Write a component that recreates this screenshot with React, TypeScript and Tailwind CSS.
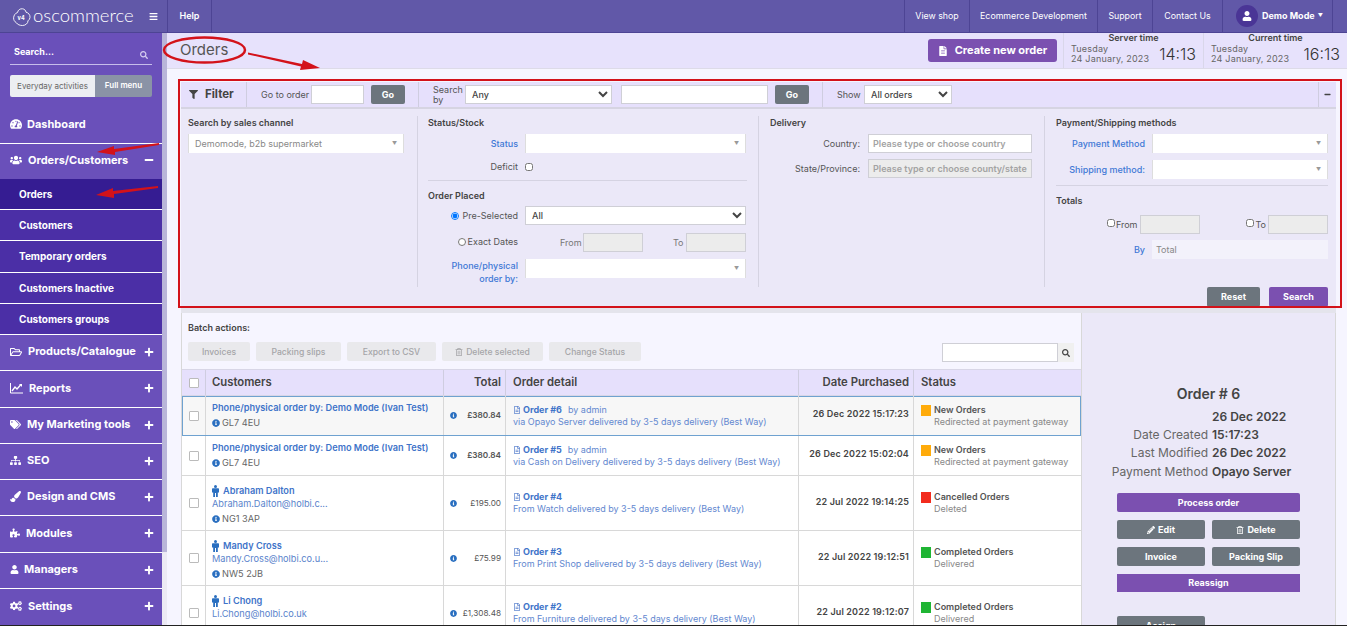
import type { ReactNode } from 'react';
import {
  FaBars, FaCogs, FaFileAlt, FaFilter, FaInfoCircle, FaMinus, FaPaintBrush,
  FaPencilAlt, FaPlus, FaPuzzlePiece, FaRegFileAlt, FaRegFolderOpen, FaRegTrashAlt, FaSearch,
  FaSitemap, FaTachometerAlt, FaTags, FaUser, FaUsers,
} from 'react-icons/fa';

function ChartIcon() {
  return (
    <svg width="13" height="12" viewBox="0 0 13 12" fill="none" stroke="#fff" className="block">
      <path d="M.5 1v10h12.500" strokeWidth="1" />
      <path d="M2 9l3-4 2 2 4-4.500" strokeWidth="1.300" />
      <path d="M9 2h3v3z" fill="#fff" stroke="none" />
    </svg>
  );
}

function MaleIcon() {
  return (
    <svg width="7" height="12" viewBox="0 0 7 12" fill="#2a6fc0" className="shrink-0">
      <circle cx="3.500" cy="1.500" r="1.500" />
      <path d="M1 3.200h5c.6 0 1 .4 1 1V7.500H5.800V12H4V8H3v4H1.200V7.500H0V4.200c0-.6.4-1 1-1Z" />
    </svg>
  );
}

const subItems = [
  { label: 'Orders', h: 'h-[31px]', cls: 'bg-[#351c92]' },
  { label: 'Customers', h: 'h-[31px]', cls: 'bg-[#4b2fa6]' },
  { label: 'Temporary orders', h: 'h-[32px]', cls: 'bg-[#4b2fa6]' },
  { label: 'Customers Inactive', h: 'h-[31px]', cls: 'bg-[#4b2fa6]' },
  { label: 'Customers groups', h: 'h-[31px]', cls: 'bg-[#4b2fa6]' },
];

const mainItems = [
  { label: 'Products/Catalogue', icon: <FaRegFolderOpen className="text-[12px]" />, w: 'w-[18px]', h: 'h-[36px]' },
  { label: 'Reports', icon: <ChartIcon />, w: 'w-[19px]', h: 'h-[37px]' },
  { label: 'My Marketing tools', icon: <FaTags className="text-[11px]" />, w: 'w-[17px]', h: 'h-[36px]' },
  { label: 'SEO', icon: <FaSitemap className="text-[11px]" />, w: 'w-[17px]', h: 'h-[36px]' },
  { label: 'Design and CMS', icon: <FaPaintBrush className="text-[11px]" />, w: 'w-[17px]', h: 'h-[36px]' },
  { label: 'Modules', icon: <FaPuzzlePiece className="text-[10px]" />, w: 'w-[16px]', h: 'h-[37px]' },
  { label: 'Managers', icon: <FaUser className="text-[9px]" />, w: 'w-[14px]', h: 'h-[36px]' },
  { label: 'Settings', icon: <FaCogs className="text-[12px]" />, w: 'w-[18px]', h: 'h-[36px]' },
];

const orders = [
  { h: 'h-[40px]', top: 'pt-[5px]', stTop: 'pt-[8px]', phone: true, name: 'Phone/physical order by: Demo Mode (Ivan Test)', post: 'GL7 4EU', total: '£380.84', no: '6', by: true, via: 'via Opayo Server delivered by 3-5 days delivery (Best Way)', date: '26 Dec 2022 15:17:23', color: 'bg-[#ffab0a]', status: 'New Orders', sub: 'Redirected at payment gateway', active: true },
  { h: 'h-[40px]', top: 'pt-[5px]', stTop: 'pt-[8px]', phone: true, name: 'Phone/physical order by: Demo Mode (Ivan Test)', post: 'GL7 4EU', total: '£380.84', no: '5', by: true, via: 'via Cash on Delivery delivered by 3-5 days delivery (Best Way)', date: '26 Dec 2022 15:02:04', color: 'bg-[#ffab0a]', status: 'New Orders', sub: 'Redirected at payment gateway' },
  { h: 'h-[55px]', top: 'pt-[8px]', stTop: 'pt-[15px]', name: 'Abraham Dalton', email: 'Abraham.Dalton@holbi.c...', post: 'NG1 3AP', total: '£195.00', no: '4', via: 'From Watch delivered by 3-5 days delivery (Best Way)', date: '22 Jul 2022 19:14:25', color: 'bg-[#f22c1e]', status: 'Cancelled Orders', sub: 'Deleted' },
  { h: 'h-[55px]', top: 'pt-[8px]', stTop: 'pt-[15px]', name: 'Mandy Cross', email: 'Mandy.Cross@holbi.co.u...', post: 'NW5 2JB', total: '£75.99', no: '3', via: 'From Print Shop delivered by 3-5 days delivery (Best Way)', date: '22 Jul 2022 19:12:51', color: 'bg-[#1fb534]', status: 'Completed Orders', sub: 'Delivered' },
  { h: 'h-[55px]', top: 'pt-[8px]', stTop: 'pt-[15px]', name: 'Li Chong', email: 'Li.Chong@holbi.co.uk', post: '', total: '£1,308.48', no: '2', via: 'From Furniture delivered by 3-5 days delivery (Best Way)', date: '22 Jul 2022 19:12:07', color: 'bg-[#1fb534]', status: 'Completed Orders', sub: 'Delivered' },
];

const cols = 'grid grid-cols-[24px_238px_62px_293px_115px_167px]';

function Logo() {
  return (
    <svg width="18" height="18" viewBox="0 0 18 18" fill="none" stroke="#fff" strokeWidth="0.9" className="mt-[1px] shrink-0">
      <path d="M4.500 4.500C5 2 7 .5 9.500.8c2 .2 3.300 1.700 3.500 3.400 2.500.5 4.300 2.800 4 5.300-.2 1.500-1 2.500-2 3.300 0 2.500-2.500 4.700-5.500 4.700-2.500 0-5-.8-6.200-2.800C1.500 13.500.5 12 .6 9.800.8 7.200 2.500 5 4.500 4.500Z" />
      <text x="4.600" y="11.500" fontSize="5.500" fontWeight="700" fill="#fff" stroke="none">v4</text>
    </svg>
  );
}

function TopLink({ children, w }: { children: ReactNode; w: string }) {
  return <div className={`${w} flex h-full items-center justify-center border-l border-[#4d4494] text-[8.800px] text-white`}>{children}</div>;
}

function TimeBox({ title, time, w, pr }: { title: string; time: string; w: string; pr: string }) {
  return (
    <div className={`${w} ${pr} flex h-full flex-col border-l border-[#d9d7ea] pl-[7px]`}>
      <div className="text-center text-[9px] leading-[10px] font-semibold text-[#444]">{title}</div>
      <div className="flex items-end justify-between pt-[1px]">
        <div className="text-[9px] leading-[10px] tracking-[0.2px] text-[#666]">Tuesday<br />24 January, 2023</div>
        <div className="text-[16px] leading-[20px] font-light text-[#333]">{time}</div>
      </div>
    </div>
  );
}

function Sidebar() {
  return (
    <aside className="flex w-[162px] shrink-0 flex-col bg-[#6a50ba] text-white">
      <div className="mx-[10px] mt-[11px] flex h-[21px] items-start justify-between border-b border-[#c7bdeb] pl-[4px] pt-[1px]">
        <span className="text-[9px] leading-[13px] font-bold">Search...</span>
        <FaSearch className="mr-[4px] mt-[6px] text-[8px] text-[#d5cdf0]" />
      </div>
      <div className="mx-[10px] mt-[10px] flex h-[22px] text-[8px]">
        <div className="flex w-[85px] items-center justify-center rounded-l-[2px] bg-[#eceef2] text-[#666]">Everyday activities</div>
        <div className="flex flex-1 items-center justify-center rounded-r-[2px] bg-[#8a93a6] pb-[3px] font-semibold">Full menu</div>
      </div>
      <div className="mt-[16px] flex h-[31px] items-center gap-[5px] border-b border-white pb-[8px] pl-[10px] text-[11px] font-bold">
        <FaTachometerAlt className="text-[12px]" />Dashboard
      </div>
      <div className="flex h-[35px] items-center gap-[6px] pb-[3px] pl-[10px] text-[11px] font-bold">
        <FaUsers className="text-[12px]" />Orders/Customers
        <FaMinus className="ml-auto mr-[8px] text-[10px]" />
      </div>
      {subItems.map((s) => (
        <div key={s.label} className={`${s.h} ${s.cls} flex shrink-0 items-center border-b border-white pl-[19px] text-[10px] font-bold`}>{s.label}</div>
      ))}
      {mainItems.map((m) => (
        <div key={m.label} className={`${m.h} flex shrink-0 items-center border-b border-white pb-[2px] pl-[10px] text-[11px] font-bold last:border-b-0`}>
          <span className={`${m.w} shrink-0`}>{m.icon}</span>{m.label}
          <FaPlus className="ml-auto mr-[8px] text-[10px]" />
        </div>
      ))}
    </aside>
  );
}

function FieldBox({ w, disabled, children }: { w: string; disabled?: boolean; children?: ReactNode }) {
  return <div className={`${w} h-[19px] border border-[#cfcfd6] px-[4px] text-[9px] leading-[17px] font-semibold text-[#a3a3a3] ${disabled ? 'bg-[#ececec]' : 'bg-white'}`}>{children}</div>;
}

function Combo({ w, text }: { w: string; text?: string }) {
  return (
    <div className={`${w} flex h-[19px] items-center justify-between border-x border-[#ddd] bg-white px-[6px] text-[9px] text-[#888]`}>
      <span>{text}</span>
      <span className="text-[5px] text-[#999]">▼</span>
    </div>
  );
}

function Native({ w, children }: { w: string; children: string }) {
  return (
    <select className={`${w} h-[19px] border border-[#cfcfd6] bg-white pl-[2px] text-[9px] font-medium text-[#444]`} defaultValue={children}>
      <option>{children}</option>
    </select>
  );
}

function Lbl({ w, blue, children }: { w: string; blue?: boolean; children: ReactNode }) {
  return <div className={`${w} shrink-0 text-right text-[9px] leading-[13px] ${blue ? 'font-medium text-[#3f78d6]' : 'text-[#555]'}`}>{children}</div>;
}

function Title({ children }: { children: string }) {
  return <div className="text-[9px] leading-[13px] font-semibold text-[#444]">{children}</div>;
}

function GoBtn() {
  return <div className="flex h-[19px] w-[34px] items-center justify-center rounded-[2px] bg-[#6c757d] text-[9px] font-bold text-white">Go</div>;
}

function Filter() {
  return (
    <section className="bg-[#ebe8f8]">
      <div className="flex h-[27px] items-center border-b-2 border-[#d6d4e2] bg-[#e6e0fc] text-[9px] text-[#555]">
        <div className="flex h-full w-[66px] items-center gap-[7px] border-r border-[#cfcde0] pl-[8px] text-[11.500px] font-bold text-[#444]">
          <FaFilter className="text-[9px]" />Filter
        </div>
        <span className="ml-[14px] w-[50px]">Go to order</span>
        <div className="h-[19px] w-[53px] border border-[#cfcfd6] bg-white" />
        <div className="ml-[7px]"><GoBtn /></div>
        <div className="ml-[13px] h-full border-l border-[#cfcde0]" />
        <span className="ml-[14px] w-[32px] leading-[10px]">Search<br />by</span>
        <Native w="w-[147px]">Any</Native>
        <div className="ml-[9px] h-[19px] w-[147px] border border-[#cfcfd6] bg-white" />
        <div className="ml-[7px]"><GoBtn /></div>
        <div className="ml-[13px] h-full border-l border-[#cfcde0]" />
        <span className="ml-[14px] w-[27px]">Show</span>
        <Native w="w-[88px]">All orders</Native>
        <div className="ml-auto flex h-full w-[18px] items-center justify-center border-l border-[#cfcde0]">
          <FaMinus className="text-[7px] text-[#444]" />
        </div>
      </div>
      <div className="grid h-[178px] grid-cols-[236px_341px_286px_1fr] pt-[7px]">
        <div className="h-[171px] px-[7px]">
          <Title>Search by sales channel</Title>
          <div className="mt-[5px]"><Combo w="w-[216px]" text="Demomode, b2b supermarket" /></div>
        </div>
        <div className="h-[171px] border-l border-[#d5d3e2] pl-[10px] pr-[11px]">
          <Title>Status/Stock</Title>
          <div className="mt-[5px] flex items-center gap-[7px]"><Lbl w="w-[90px]" blue>Status</Lbl><Combo w="w-[221px]" /></div>
          <div className="mt-[7px] flex items-center gap-[7px]">
            <Lbl w="w-[90px]">Deficit</Lbl>
            <input type="checkbox" className="h-[8px] w-[8px]" />
          </div>
          <div className="mt-[7px] border-t border-[#d5d3e2]" />
          <div className="mt-[8px]"><Title>Order Placed</Title></div>
          <div className="mt-[4px] flex h-[19px] items-center gap-[7px]">
            <Lbl w="w-[90px]"><input type="radio" name="placed" defaultChecked className="mr-[3px] h-[8px] w-[8px] align-[-1px]" />Pre-Selected</Lbl>
            <Native w="w-[221px]">All</Native>
          </div>
          <div className="mt-[8px] flex h-[19px] items-center">
            <div className="pb-[3px]"><Lbl w="w-[90px]"><input type="radio" name="placed" className="mr-[2px] h-[8px] w-[8px] align-[-1px]" />Exact Dates</Lbl></div>
            <span className="ml-[42px] w-[24px] text-[9px] text-[#777]">From</span>
            <FieldBox w="ml-[-1px] w-[60px]" disabled />
            <span className="ml-[30px] w-[13px] text-[9px] text-[#777]">To</span>
            <FieldBox w="w-[60px]" disabled />
          </div>
          <div className="mt-[7px] flex items-start gap-[7px]">
            <Lbl w="w-[90px]" blue>Phone/physical<br />order by:</Lbl>
            <Combo w="w-[221px]" />
          </div>
        </div>
        <div className="h-[171px] border-l border-[#d5d3e2] pl-[11px]">
          <Title>Delivery</Title>
          <div className="mt-[5px] flex items-center gap-[8px]"><Lbl w="w-[90px]">Country:</Lbl><FieldBox w="w-[164px]">Please type or choose country</FieldBox></div>
          <div className="mt-[6px] flex items-center gap-[8px]"><Lbl w="w-[90px]">State/Province:</Lbl><FieldBox w="w-[164px] overflow-hidden whitespace-nowrap" disabled>Please type or choose county/state</FieldBox></div>
        </div>
        <div className="h-[171px] border-l border-[#d5d3e2] pl-[11px] pr-[8px]">
          <Title>Payment/Shipping methods</Title>
          <div className="mt-[5px] flex items-center gap-[7px]"><Lbl w="w-[89px]" blue>Payment Method</Lbl><Combo w="w-[176px]" /></div>
          <div className="mt-[7px] flex items-center gap-[7px]"><Lbl w="w-[89px]" blue>Shipping method:</Lbl><Combo w="w-[176px]" /></div>
          <div className="mt-[6px] border-t border-[#d5d3e2]" />
          <div className="mt-[8px]"><Title>Totals</Title></div>
          <div className="mt-[8px] flex h-[19px] items-center justify-end text-[9px] text-[#555]">
            <input type="checkbox" className="mb-[4px] h-[8px] w-[8px]" />
            <span className="ml-[1px] mr-[3px]">From</span>
            <FieldBox w="w-[60px]" disabled />
            <input type="checkbox" className="mb-[4px] ml-[46px] h-[8px] w-[8px]" />
            <span className="ml-[1px] mr-[2px]">To</span>
            <FieldBox w="w-[60px]" disabled />
          </div>
          <div className="mt-[6px] flex items-center gap-[7px]">
            <Lbl w="w-[89px]" blue>By</Lbl>
            <div className="h-[19px] w-[176px] bg-[#f3f2fb] px-[4px] text-[9px] leading-[19px] text-[#888]">Total</div>
          </div>
        </div>
      </div>
      <div className="flex h-[20px] justify-end gap-[9px] pr-[8px] text-[9px] font-bold text-white">
        <div className="flex w-[53px] items-center justify-center rounded-[2px] bg-[#6c757d]">Reset</div>
        <div className="flex w-[59px] items-center justify-center rounded-[2px] bg-[#7b50b0]">Search</div>
      </div>
    </section>
  );
}

function BatchBtn({ w, children }: { w: string; children: ReactNode }) {
  return <div className={`${w} flex h-[19px] items-center justify-center gap-[3px] rounded-[2px] bg-[#e9e9ec] pt-[1px] text-[8.600px] font-medium text-[#a5a5a8]`}>{children}</div>;
}

function OrderRow({ o }: { o: (typeof orders)[number] }) {
  const cell = 'border-r border-[#d8d8d8]';
  return (
    <div className={`${cols} ${o.h} border-b ${o.active ? 'border-[#6fa2d0] bg-[#f7f7f7] shadow-[inset_0_1px_0_#6fa2d0,inset_1px_0_0_#6fa2d0,inset_-1px_0_0_#6fa2d0]' : 'border-[#d8d8d8] bg-white'}`}>
      <div className={`${cell} flex items-center justify-center`}>
        <span className="h-[10px] w-[10px] rounded-[1px] border border-[#bbb] bg-white" />
      </div>
      <div className={`${cell} ${o.top} pl-[6px] text-[9.200px]`}>
        <div className="flex items-center gap-[4px] leading-[13px] font-semibold text-[#3f74c9]">
          {!o.phone && <MaleIcon />}{o.name}
        </div>
        {o.email && <div className="leading-[13px] text-[#5a84cc]">{o.email}</div>}
        {o.post && (
          <div className="mt-[3px] flex items-center gap-[2px] leading-[12px] text-[#666]">
            <FaInfoCircle className="text-[8px] text-[#2a6fc0]" />{o.post}
          </div>
        )}
      </div>
      <div className={`${cell} flex items-center justify-between pl-[6px] pr-[4px] text-[8.200px] text-[#555] ${o.phone ? 'font-semibold' : ''}`}>
        <FaInfoCircle className="text-[7px] text-[#2a6fc0]" />{o.total}
      </div>
      <div className={`${cell} flex flex-col justify-center pl-[7px] text-[9px] text-[#6388d0]`}>
        <div className="flex items-center gap-[2px] leading-[12px]">
          <FaRegFileAlt className="text-[8px]" />
          <span className="font-bold text-[#3f74c9]">Order #{o.no}</span>
          {o.by && <span className="ml-[4px]">by admin</span>}
        </div>
        <div className="leading-[12px]">{o.via}</div>
      </div>
      <div className={`${cell} flex items-center justify-end pr-[4px] pb-[3px] text-[9px] font-semibold tracking-[0.15px] text-[#444]`}>{o.date}</div>
      <div className={`${o.stTop} flex items-start pl-[7px]`}>
        <span className={`${o.color} mt-[1px] h-[11px] w-[10px] shrink-0`} />
        <div className="ml-[3px] text-[9px]">
          <div className="leading-[12px] font-semibold text-[#555]">{o.status}</div>
          <div className="leading-[12px] text-[#888]">{o.sub}</div>
        </div>
      </div>
    </div>
  );
}

function OrdersTable() {
  const head = 'flex items-center border-r border-[#cfcde0]';
  return (
    <div className="w-[900px] shrink-0 border-l border-[#d8d8d8]">
      <div className="px-[6px] pt-[9px] text-[9px] leading-[11px] font-semibold text-[#444]">Batch actions:</div>
      <div className="mt-[9px] flex h-[20px] px-[6px]">
        <div className="flex gap-[6px]">
          <BatchBtn w="w-[62px]">Invoices</BatchBtn>
          <BatchBtn w="w-[85px]">Packing slips</BatchBtn>
          <BatchBtn w="w-[89px]">Export to CSV</BatchBtn>
          <BatchBtn w="w-[101px]"><FaRegTrashAlt className="text-[8px]" />Delete selected</BatchBtn>
          <BatchBtn w="w-[92px]">Change Status</BatchBtn>
        </div>
        <div className="ml-auto mr-[1px] mt-[1px] flex">
          <div className="h-[19px] w-[116px] border border-[#cfcfd6] bg-white" />
          <div className="flex h-[19px] w-[16px] items-center justify-center bg-[#f0f0f0]"><FaSearch className="text-[8px] text-[#444]" /></div>
        </div>
      </div>
      <div className={`${cols} mt-[7px] h-[27px] border-y border-[#d8d6e6] bg-[#e6e0fc] text-[11.300px] font-semibold text-[#444]`}>
        <div className={`${head} justify-center`}><span className="h-[10px] w-[10px] rounded-[1px] border border-[#bbb] bg-white" /></div>
        <div className={`${head} pl-[6px]`}>Customers</div>
        <div className={`${head} justify-end pr-[4px]`}>Total</div>
        <div className={`${head} pl-[7px]`}>Order detail</div>
        <div className={`${head} justify-end pr-[4px]`}>Date Purchased</div>
        <div className="flex items-center pl-[7px]">Status</div>
      </div>
      {orders.map((o) => <OrderRow key={o.no} o={o} />)}
    </div>
  );
}

function SideBtn({ w, purple, children }: { w: string; purple?: boolean; children: ReactNode }) {
  return <div className={`${w} flex h-[19px] items-center justify-center gap-[3px] rounded-[2px] text-[9px] font-bold text-white ${purple ? 'bg-[#7b50b0]' : 'bg-[#6c757d]'}`}>{children}</div>;
}

function DetailRow({ label, value, lh }: { label?: string; value: string; lh: string }) {
  return (
    <div className={`${lh} flex gap-[4px] text-[12px]`}>
      <div className="w-[126px] shrink-0 text-right whitespace-nowrap text-[#666]">{label}</div>
      <div className="font-semibold text-[#444]">{value}</div>
    </div>
  );
}

function OrderPanel() {
  return (
    <div className="flex-1 border-x border-[#d8d8d8] bg-[#ebe8f8] pt-[72px]">
      <div className="text-center text-[14px] leading-[18px] font-semibold text-[#444]">Order # 6</div>
      <div className="mt-[5px] flex flex-col">
        <DetailRow lh="leading-[18px]" value="26 Dec 2022" />
        <DetailRow lh="leading-[17px]" label="Date Created" value="15:17:23" />
        <DetailRow lh="leading-[19px]" label="Last Modified" value="26 Dec 2022" />
        <DetailRow lh="leading-[19px]" label="Payment Method" value="Opayo Server" />
      </div>
      <div className="ml-[35px] mt-[12px] flex w-[183px] flex-col gap-[8px]">
        <SideBtn w="w-full" purple>Process order</SideBtn>
        <div className="flex justify-between"><SideBtn w="w-[88px]"><FaPencilAlt className="text-[8px]" />Edit</SideBtn><SideBtn w="w-[88px]"><FaRegTrashAlt className="text-[8px]" />Delete</SideBtn></div>
        <div className="flex justify-between"><SideBtn w="w-[88px]">Invoice</SideBtn><SideBtn w="w-[88px]">Packing Slip</SideBtn></div>
        <div className="flex h-[18px] items-center justify-center bg-[#7b50b0] text-[9px] font-bold text-white">Reassign</div>
        <div className="mt-[16px]"><SideBtn w="w-[88px]">Assign</SideBtn></div>
      </div>
    </div>
  );
}

export default function App() {
  return (
    <div className="relative flex h-[626px] w-full flex-col overflow-hidden border-b border-[#222] bg-[#f6f5ff] [font-family:Inter,sans-serif]">
      <header className="flex h-[33px] shrink-0 items-center border-b border-[#4d4494] bg-[#6158a8] text-white">
        <div className="flex h-full w-[167px] items-center pl-[13px]">
          <Logo />
          <span className="ml-[2px] text-[18.500px] font-light [font-family:Lato,sans-serif]">oscommerce</span>
          <FaBars className="ml-auto mr-[9px] text-[9px]" />
        </div>
        <div className="flex h-full w-[45px] items-center justify-center border-x border-[#4d4494] text-[9px] font-semibold">Help</div>
        <div className="ml-auto flex h-full">
          <TopLink w="w-[65px]">View shop</TopLink>
          <TopLink w="w-[128px]">Ecommerce Development</TopLink>
          <TopLink w="w-[55px]">Support</TopLink>
          <TopLink w="w-[70px]">Contact Us</TopLink>
          <div className="flex h-full w-[111px] items-center gap-[3px] border-x border-[#4d4494] pl-[13px] text-[9px] font-bold">
            <span className="mr-[1px] flex h-[22px] w-[22px] items-center justify-center rounded-full bg-[#4a3596]"><FaUser className="text-[10px]" /></span>
            <span>Demo Mode</span><span className="text-[5px]">▼</span>
          </div>
          <div className="w-[14px]" />
        </div>
      </header>
      <div className="flex min-h-0 flex-1">
        <Sidebar />
        <div className="flex w-[5px] shrink-0 flex-col bg-[#b9b5d9]">
          <div className="flex-1" />
          <div className="h-[73px] bg-[#eceaf4]" />
        </div>
        <main className="min-w-0 flex-1">
          <div className="flex h-[36px] items-center border-b border-[#dddbe8] bg-[#e7e2fc] pl-[13px]">
            <h1 className="text-[15px] font-normal text-[#555]">Orders</h1>
            <div className="ml-auto mr-[6px] flex h-[23px] w-[129px] items-center justify-center gap-[7px] rounded-[3px] bg-[#7b50b0] text-[11px] font-bold text-white">
              <FaFileAlt className="text-[10px]" />Create new order
            </div>
            <TimeBox title="Server time" time="14:13" w="w-[140px]" pr="pr-[7px]" />
            <TimeBox title="Current time" time="16:13" w="w-[144px]" pr="pr-[7px]" />
          </div>
          <div className="ml-[14px] mr-[11px] pt-[13px]">
            <Filter />
            <div className="h-[6px] bg-[#e4e4ec]" />
            <div className="flex">
              <OrdersTable />
              <OrderPanel />
            </div>
          </div>
        </main>
      </div>

      {/* red callouts drawn over the screenshot */}
      <div className="pointer-events-none absolute left-[178px] top-[79px] h-[229px] w-[1164px] border-2 border-[#d3121a]" />
      <svg className="pointer-events-none absolute left-0 top-0" width="1347" height="626" fill="#d3121a">
        <ellipse cx="204.500" cy="50" rx="40.500" ry="12.500" fill="none" stroke="#d3121a" strokeWidth="2.500" />
        <polygon points="248,52.500 302,64 303,60 320,68 300,70 301,66.500 248,54.500" />
        <polygon points="159,143 114,149 114,146 97,152 115,155 115,152 159,145" />
        <polygon points="158,186 113,191 113,188 96,195 114,198 114,194 158,188" />
      </svg>
    </div>
  );
}
